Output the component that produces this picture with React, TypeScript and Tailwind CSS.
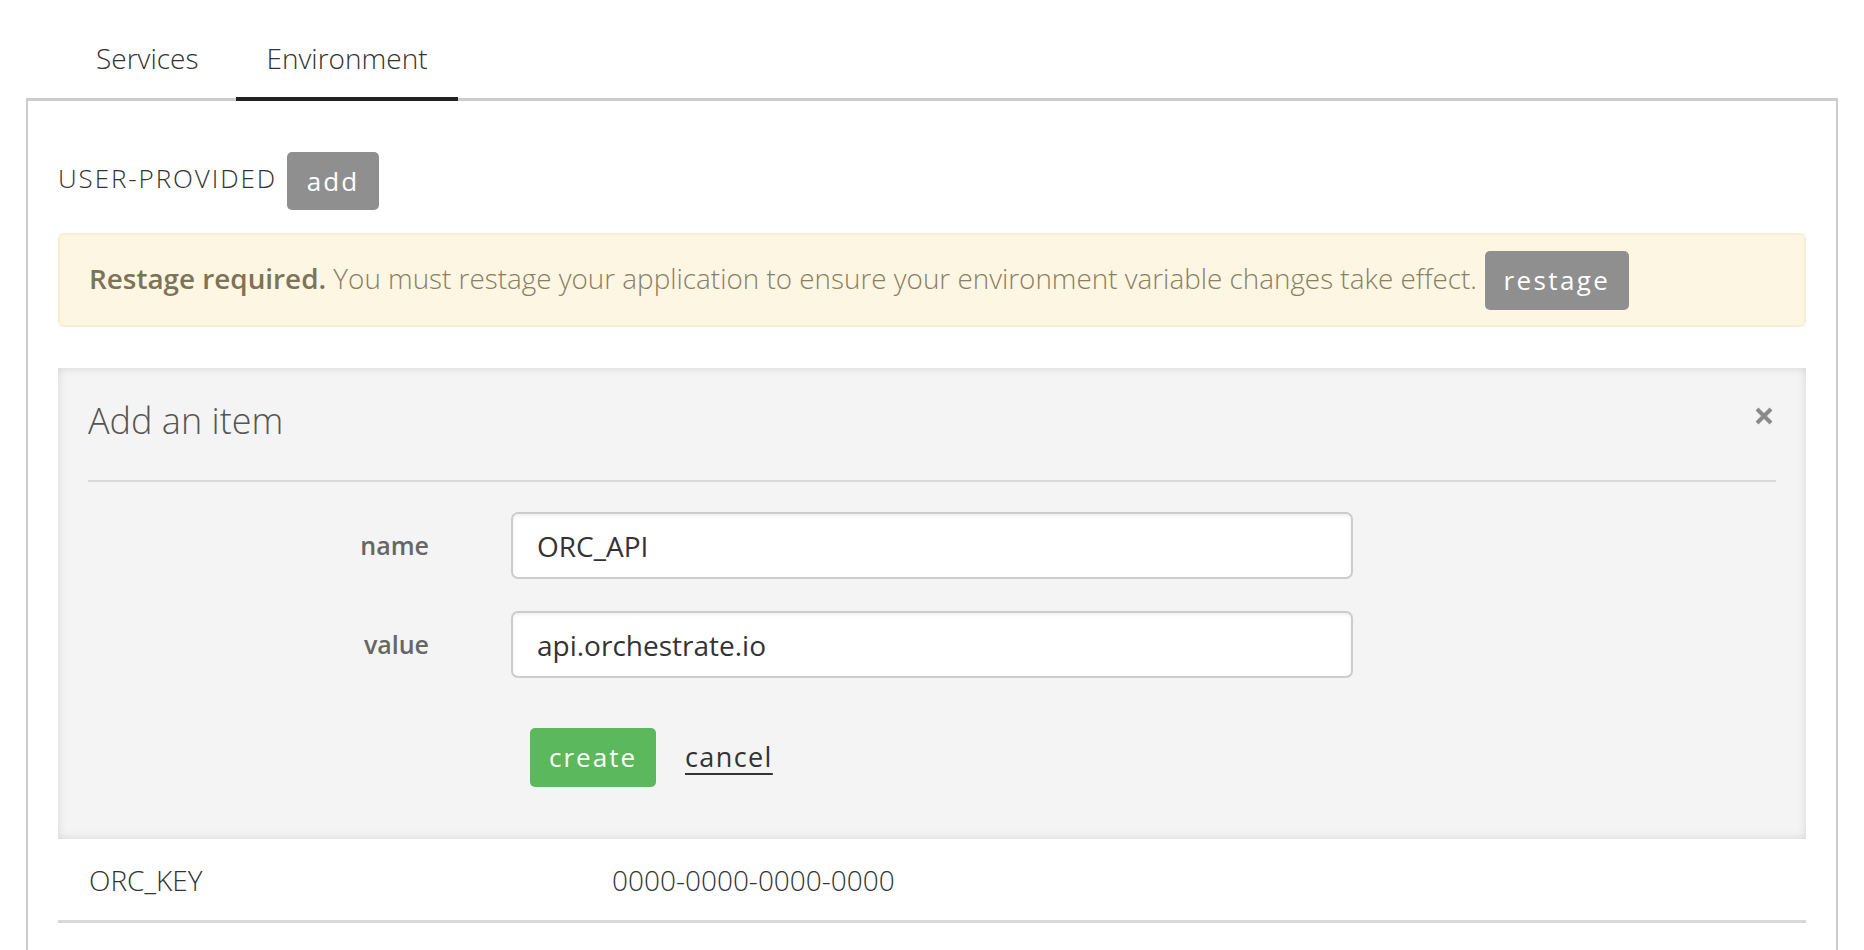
import React, { useState } from 'react';

const font = "font-['Open_Sans',sans-serif]";

const CloseIcon = () => (
  <svg width="18" height="18" viewBox="0 0 18 18" aria-hidden="true">
    <path d="M2 2 L16 16 M16 2 L2 16" stroke="#8a8a8a" strokeWidth="4" strokeLinecap="butt" />
  </svg>
);

const App: React.FC = () => {
  const [name, setName] = useState('ORC_API');
  const [value, setValue] = useState('api.orchestrate.io');
  const [tab, setTab] = useState('environment');

  return (
    <div className={`${font} h-[950px] w-full overflow-hidden bg-white text-[#333]`}>
      <div className="px-[26px]">
        {/* tabs */}
        <div className="flex gap-[7px] pl-[39px]">
          <button
            type="button"
            onClick={() => setTab('services')}
            className={`relative z-10 -mb-[3px] border-b-4 px-[31px] pt-[40px] pb-[21px] text-[28px] leading-[36px] font-light ${
              tab === 'services' ? 'border-[#222]' : 'border-transparent'
            }`}
          >
            Services
          </button>
          <button
            type="button"
            onClick={() => setTab('environment')}
            className={`relative z-10 -mb-[3px] border-b-4 px-[30px] pt-[40px] pb-[21px] text-[28px] leading-[36px] font-light ${
              tab === 'environment' ? 'border-[#222]' : 'border-transparent'
            }`}
          >
            Environment
          </button>
        </div>

        {/* panel */}
        <div className="h-[900px] border-x-2 border-t-[3px] border-[#cccccc] px-[30px] pt-[51px]">
          <div className="flex items-center">
            <span className="pb-[7px] text-[26px] leading-[34px] font-light tracking-[1.9px] text-[#333]">USER-PROVIDED</span>
            <button
              type="button"
              className="ml-[10px] h-[58px] w-[92px] rounded-[5px] bg-[#8f8f8f] text-[26px] tracking-[2px] text-white"
            >
              add
            </button>
          </div>

          <div className="mt-[23px] flex h-[94px] items-center rounded-[6px] border-2 border-[#f8ecd2] bg-[#fdf6e3] px-[29px]">
            <p className="pb-[4px] text-[27.85px] leading-[36px] font-light text-[#8a7f63]">
              <span className="font-semibold text-[#7d7356]">Restage required.</span> You must restage your application to
              ensure your environment variable changes take effect.
            </p>
            <button
              type="button"
              className="ml-[8px] h-[59px] w-[144px] shrink-0 rounded-[5px] bg-[#8f8f8f] text-[26px] tracking-[2.4px] text-white"
            >
              restage
            </button>
          </div>

          {/* add an item */}
          <div className="mt-[41px] h-[471px] bg-[#f4f4f4] px-[30px] pt-[30px] shadow-[inset_0_0_10px_rgba(0,0,0,0.13)]">
            <div className="flex items-start justify-between">
              <h2 className="text-[36px] leading-[46px] font-light text-[#555]">Add an item</h2>
              <button type="button" className="mt-[7px] mr-[3px] pt-[2px]">
                <CloseIcon />
              </button>
            </div>
            <div className="mt-[36px] h-[2px] bg-[#d9d9d9]" />

            <div className="mt-[30px] -ml-[30px] flex items-center">
              <label className="w-[371px] text-right text-[25px] font-semibold text-[#666]">name</label>
              <input
                value={name}
                onChange={(e) => setName(e.target.value)}
                className="ml-[82px] h-[67px] w-[842px] rounded-[7px] border-2 border-[#cccccc] bg-white px-[24px] text-[28px] text-[#333] shadow-[inset_0_2px_3px_rgba(0,0,0,0.06)] outline-none"
              />
            </div>
            <div className="mt-[32px] -ml-[30px] flex items-center">
              <label className="w-[371px] text-right text-[25px] font-semibold text-[#666]">value</label>
              <input
                value={value}
                onChange={(e) => setValue(e.target.value)}
                className="ml-[82px] h-[67px] w-[842px] rounded-[7px] border-2 border-[#cccccc] bg-white px-[24px] text-[28px] text-[#333] shadow-[inset_0_2px_3px_rgba(0,0,0,0.06)] outline-none"
              />
            </div>

            <div className="mt-[50px] flex items-center pl-[442px]">
              <button
                type="button"
                className="h-[59px] w-[126px] rounded-[5px] bg-[#5cb85c] text-[26px] tracking-[2px] text-white"
              >
                create
              </button>
              <button type="button" className="ml-[29px] text-[27px] tracking-[1.4px] text-[#333] underline underline-offset-[6px]">
                cancel
              </button>
            </div>
          </div>

          <div className="flex h-[84px] items-center border-b-[3px] border-[#d9d9d9] pl-[31px] text-[28px] font-light text-[#333]">
            <span className="w-[523px]">ORC_KEY</span>
            <span>0000-0000-0000-0000</span>
          </div>
        </div>
      </div>
    </div>
  );
};

export default App;
